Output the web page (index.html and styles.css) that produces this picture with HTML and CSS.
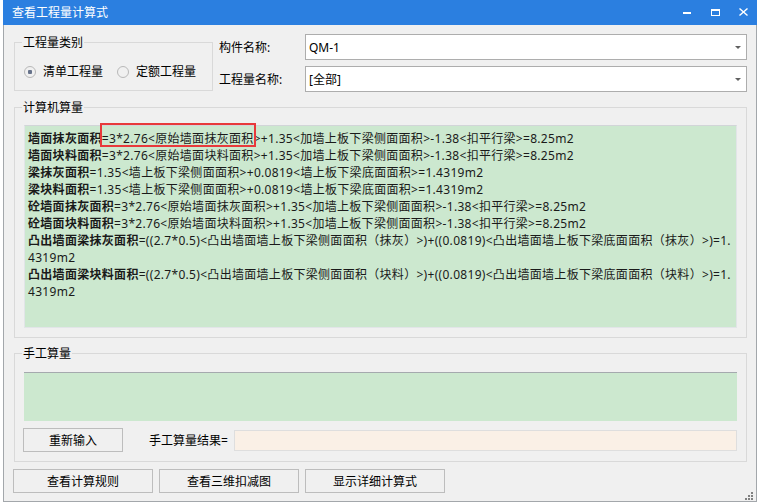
FILE: index.html
```html
<!DOCTYPE html>
<html lang="zh-CN">
  <head>
    <meta charset="UTF-8" />
    <title>查看工程量计算式</title>
    <link rel="stylesheet" href="styles.css">
  </head>
  <body>
    <div class="window">
      <div class="titlebar">
        <span class="title">查看工程量计算式</span>
        <div class="controls">
          <svg width="9" height="9" viewBox="0 0 9 9"><rect x="0" y="4" width="8" height="2" fill="#fff"/></svg>
          <svg width="9" height="9" viewBox="0 0 9 9"><rect x="0.5" y="1.5" width="8" height="6" fill="none" stroke="#fff"/><rect x="0" y="1" width="9" height="2" fill="#fff"/></svg>
          <svg width="9" height="9" viewBox="0 0 9 9"><path d="M0.5 0.5 L8.5 7.5 M8.5 0.5 L0.5 7.5" stroke="#fff" stroke-width="1.4"/></svg>
        </div>
      </div>

      <div class="content">
        <div class="top-row">
          <fieldset class="group type-group">
            <legend>工程量类别</legend>
            <div class="radios">
              <label class="radio-item"><span class="radio checked"></span>清单工程量</label>
              <label class="radio-item"><span class="radio"></span>定额工程量</label>
            </div>
          </fieldset>

          <div class="form">
            <div class="form-row">
              <span class="form-label">构件名称:</span>
              <div class="combo">QM-1<span class="arrow"></span></div>
            </div>
            <div class="form-row">
              <span class="form-label">工程量名称:</span>
              <div class="combo">[全部]<span class="arrow"></span></div>
            </div>
          </div>
        </div>

        <fieldset class="group calc-group">
          <legend>计算机算量</legend>
          <div class="formula-box">
            <p><b>墙面抹灰面积</b><span class="mark">=3*2.76&lt;原始墙面抹灰面积</span>&gt;+1.35&lt;加墙上板下梁侧面面积&gt;-1.38&lt;扣平行梁&gt;=8.25m2</p>
            <p><b>墙面块料面积</b>=3*2.76&lt;原始墙面块料面积&gt;+1.35&lt;加墙上板下梁侧面面积&gt;-1.38&lt;扣平行梁&gt;=8.25m2</p>
            <p><b>梁抹灰面积</b>=1.35&lt;墙上板下梁侧面面积&gt;+0.0819&lt;墙上板下梁底面面积&gt;=1.4319m2</p>
            <p><b>梁块料面积</b>=1.35&lt;墙上板下梁侧面面积&gt;+0.0819&lt;墙上板下梁底面面积&gt;=1.4319m2</p>
            <p><b>砼墙面抹灰面积</b>=3*2.76&lt;原始墙面抹灰面积&gt;+1.35&lt;加墙上板下梁侧面面积&gt;-1.38&lt;扣平行梁&gt;=8.25m2</p>
            <p><b>砼墙面块料面积</b>=3*2.76&lt;原始墙面块料面积&gt;+1.35&lt;加墙上板下梁侧面面积&gt;-1.38&lt;扣平行梁&gt;=8.25m2</p>
            <p><b>凸出墙面梁抹灰面积</b>=((2.7*0.5)&lt;凸出墙面墙上板下梁侧面面积（抹灰）&gt;)+((0.0819)&lt;凸出墙面墙上板下梁底面面积（抹灰）&gt;)=1.4319m2</p>
            <p><b>凸出墙面梁块料面积</b>=((2.7*0.5)&lt;凸出墙面墙上板下梁侧面面积（块料）&gt;)+((0.0819)&lt;凸出墙面墙上板下梁底面面积（块料）&gt;)=1.4319m2</p>
          </div>
        </fieldset>

        <fieldset class="group manual-group">
          <legend>手工算量</legend>
          <div class="manual-box"></div>
          <div class="manual-row">
            <button class="btn reinput-btn">重新输入</button>
            <span class="result-label">手工算量结果=</span>
            <div class="result-input"></div>
          </div>
        </fieldset>

        <div class="bottom-buttons">
          <button class="btn wide-btn">查看计算规则</button>
          <button class="btn wide-btn">查看三维扣减图</button>
          <button class="btn wide-btn">显示详细计算式</button>
        </div>
      </div>

      <svg class="grip" width="8" height="8" viewBox="0 0 8 8">
        <rect x="6" y="0" width="2" height="2" fill="#808080"/>
        <rect x="3" y="3" width="2" height="2" fill="#808080"/>
        <rect x="6" y="3" width="2" height="2" fill="#808080"/>
        <rect x="0" y="6" width="2" height="2" fill="#808080"/>
        <rect x="3" y="6" width="2" height="2" fill="#808080"/>
        <rect x="6" y="6" width="2" height="2" fill="#808080"/>
      </svg>
    </div>
  </body>
</html>
```

FILE: styles.css
```css
* {
  box-sizing: border-box;
}

body {
  margin: 0;
  background-color: #fff;
  font-family: "Noto Sans", "Noto Sans CJK SC", sans-serif;
  font-size: 12px;
  line-height: 17px;
  color: #000;
}

.window {
  position: relative;
  margin-left: 3px;
  width: 754px;
  height: 502px;
  background-color: #f0f0f0;
  border: 1px solid #a3a7ab;
  border-top: none;
}

.titlebar {
  height: 25px;
  margin: 0 -1px;
  padding: 0 9px;
  background-color: #2b7fe0;
  color: #fff;
  display: flex;
  align-items: center;
  justify-content: space-between;
}

.controls {
  display: flex;
  gap: 19px;
}

.controls svg {
  display: block;
}

.content {
  padding: 9px 9px 0 10px;
}

.top-row {
  display: flex;
  gap: 6px;
  height: 58px;
}

/* group boxes */
.group {
  margin: 0;
  padding: 0 9px 9px;
  border: 1px solid #d9d9d9;
  min-width: 0;
}

.group legend {
  padding: 0 1px;
  margin-left: -2px;
}

.type-group {
  width: 199px;
  height: 57px;
}

.radios {
  display: flex;
  gap: 14px;
  margin-top: 12px;
}

.radio-item {
  display: flex;
  align-items: center;
  gap: 7px;
}

.radio {
  width: 12px;
  height: 12px;
  border: 1px solid #b8b8b8;
  border-radius: 50%;
  display: flex;
  align-items: center;
  justify-content: center;
}

.radio.checked::after {
  content: "";
  width: 4px;
  height: 4px;
  border-radius: 1px;
  background-color: #66728a;
}

.form {
  flex: 1;
  display: flex;
  flex-direction: column;
  gap: 6px;
}

.form-row {
  display: flex;
  align-items: center;
  height: 26px;
}

.form-label {
  width: 86px;
}

.combo {
  flex: 1;
  height: 26px;
  padding: 0 5px 0 3px;
  background-color: #fff;
  border: 1px solid #adadad;
  display: flex;
  align-items: center;
  justify-content: space-between;
}

.arrow {
  border-left: 3px solid transparent;
  border-right: 3px solid transparent;
  border-top: 3px solid #606060;
}

/* computed formulas */
.calc-group {
  margin-top: 7px;
}

.formula-box {
  margin-top: 9px;
  height: 203px;
  padding: 4px 5px 4px 3px;
  background-color: #cce8cf;
  border: 1px solid #e2e5e8;
  border-top-color: #d2d5d8;
  color: #1a1a1a;
}

.formula-box p {
  margin: 0;
  letter-spacing: 0.3px;
  word-break: break-all;
}

.mark {
  position: relative;
}

.mark::after {
  content: "";
  position: absolute;
  top: -7px;
  bottom: 0;
  left: -2px;
  right: -2px;
  border: 2px solid #e8393b;
}

/* manual quantity */
.manual-group {
  margin-top: 7px;
}

.manual-box {
  margin-top: 10px;
  height: 49px;
  background-color: #cce8cf;
  border-top: 1px solid #a5a9ae;
}

.manual-row {
  display: flex;
  align-items: center;
  margin-top: 7px;
  height: 24px;
}

.btn {
  height: 24px;
  padding: 0;
  font: inherit;
  color: #000;
  background-color: #f0f0f0;
  border: 1px solid #bdbdbd;
}

.reinput-btn {
  width: 100px;
  margin-left: -1px;
}

.result-label {
  margin-left: 26px;
}

.result-input {
  flex: 1;
  height: 21px;
  margin-left: 6px;
  background-color: #faf0e6;
  border: 1px solid #dedede;
}

.bottom-buttons {
  display: flex;
  gap: 6px;
  margin-top: 7px;
  margin-left: -1px;
}

.wide-btn {
  width: 140px;
}

.grip {
  position: absolute;
  right: 3px;
  bottom: 1px;
}
```
